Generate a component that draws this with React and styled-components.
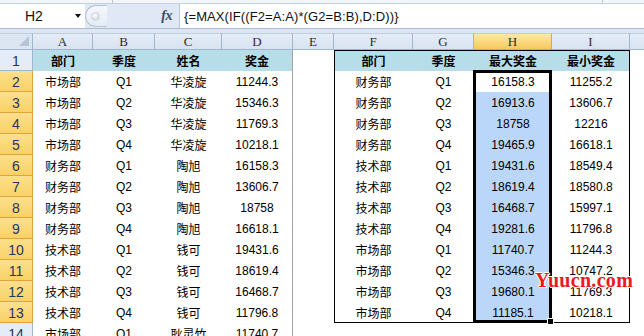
import React from 'react';
import styled, { createGlobalStyle } from 'styled-components';

const GlobalStyle = createGlobalStyle`
  html, body {
    margin: 0;
    padding: 0;
    background: #fff;
    overflow: hidden;
  }
`

const Window = styled.div`
  width: 644px;
  height: 336px;
  overflow: hidden;
  position: relative;
  font-family: "Liberation Sans", "Noto Sans CJK SC", sans-serif;
`

const TopStrip = styled.div`
  height: 3px;
  background: #f2f5f9;
  border-bottom: 1px solid #c3d0df;
  display: flex;
`

const StripTick = styled.div`
  width: ${p => p.$w}px;
  border-right: 1px solid #b9c6d6;
`

const FormulaBar = styled.div`
  display: flex;
  height: 24px;
  background: #dfe8f4;
  border-bottom: 1px solid #a9bbd2;
`

const NameBox = styled.div`
  width: 85px;
  background: #fff;
  display: flex;
  align-items: center;
  padding-left: 25px;
  box-sizing: border-box;
  font-size: 14px;
  color: #111;
`

const DropArrow = styled.div`
  margin-left: auto;
  margin-right: 4px;
  width: 0;
  height: 0;
  border-left: 3.5px solid transparent;
  border-right: 3.5px solid transparent;
  border-top: 4px solid #111;
`

const Grip = styled.div`
  width: 22px;
  height: 22px;
  margin-top: 1px;
  box-sizing: border-box;
  border: 1px solid #b4c3d6;
  border-right: none;
  border-radius: 11px 0 0 11px;
  background: linear-gradient(#f6f8fb, #e4ebf4);
  display: flex;
  align-items: center;
  padding-left: 5px;
`

const GripDot = styled.div`
  width: 7px;
  height: 7px;
  border-radius: 50%;
  background: radial-gradient(circle at 40% 35%, #ffffff, #c2ccd8);
  border: 1px solid #cdd5df;
`

const FxZone = styled.div`
  width: 72px;
  display: flex;
  align-items: center;
  justify-content: flex-end;
  padding-right: 7px;
  box-sizing: border-box;
`

const FxLabel = styled.span`
  font-family: "Liberation Serif", serif;
  font-style: italic;
  font-weight: bold;
  font-size: 14px;
  color: #3a4a60;
  letter-spacing: -0.5px;
`

const FormulaInput = styled.div`
  flex: 1;
  background: #fff;
  border-left: 1px solid #b8c8da;
  display: flex;
  align-items: center;
  padding-left: 4px;
  font-size: 13px;
  letter-spacing: 0.1px;
  color: #111;
  white-space: nowrap;
`

const Gap = styled.div`
  height: 4px;
  background: #dde6f1;
`

const Sheet = styled.div`
  display: grid;
  grid-template-columns: 33px 60px 62px 67px 71px 41px 79px 61px 78px 78px 78px;
  grid-template-rows: 17px;
  grid-auto-rows: 21px;
  position: relative;
`

const Corner = styled.div`
  grid-row: 1;
  grid-column: 1;
  background: #dce6f2;
  border-right: 1px solid #9eb6ce;
  border-bottom: 1px solid #9eb6ce;
  border-top: 1px solid #c0cfe0;
  box-sizing: border-box;
  position: relative;

  &::after {
    content: '';
    position: absolute;
    right: 3px;
    bottom: 3px;
    border-left: 10px solid transparent;
    border-bottom: 10px solid #b6c4d5;
  }
`

const ColHeader = styled.div`
  grid-row: 1;
  grid-column: ${p => p.$c};
  background: ${p => p.$active ? 'linear-gradient(#fde8a6, #f7c95c)' : 'linear-gradient(#e4ecf7, #d9e3f0)'};
  border-right: 1px solid ${p => p.$active ? '#e9a43c' : '#9eb6ce'};
  border-bottom: 1px solid ${p => p.$active ? '#e9a43c' : '#9eb6ce'};
  border-top: 1px solid #c0cfe0;
  box-sizing: border-box;
  display: flex;
  align-items: center;
  justify-content: center;
  font-family: "Liberation Serif", serif;
  font-size: 13px;
  color: #2d2d2d;
`

const RowHeader = styled.div`
  grid-row: ${p => p.$r};
  grid-column: 1;
  background: ${p => p.$active ? 'linear-gradient(#fde08e, #f9d165)' : '#e4ecf7'};
  border-right: 1px solid ${p => p.$active ? '#e3a33a' : '#9eb6ce'};
  border-bottom: 1px solid ${p => p.$active ? '#e3a33a' : '#9eb6ce'};
  box-sizing: border-box;
  display: flex;
  align-items: center;
  justify-content: center;
  padding-top: 2px;
  font-size: 14px;
  color: #1d3760;
`

const Cell = styled.div`
  grid-row: ${p => p.$r};
  grid-column: ${p => p.$c};
  background: ${p => p.$head ? '#b7dee8' : p.$sel ? '#bad7f9' : '#fff'};
  border-right: ${p => p.$edge ? '1px solid #a3a3a3' : 'none'};
  box-sizing: border-box;
  display: flex;
  align-items: center;
  justify-content: center;
  font-size: 12px;
  font-weight: ${p => p.$bold ? 'bold' : 'normal'};
  color: #000;
  white-space: nowrap;
`

const TableFrame = styled.div`
  grid-column: ${p => p.$cols};
  grid-row: ${p => p.$rows};
  border: 1px solid #000;
  pointer-events: none;
  z-index: 1;
`

const SelectionFrame = styled.div`
  grid-column: ${p => p.$cols};
  grid-row: ${p => p.$rows};
  margin: -1px 0 0 -1px;
  border: 3px solid #000;
  position: relative;
  pointer-events: none;
  z-index: 2;
`

const FillHandle = styled.div`
  position: absolute;
  right: -5px;
  bottom: -5px;
  width: 5px;
  height: 5px;
  background: #000;
  border: 1px solid #fff;
`

const Watermark = styled.div`
  position: absolute;
  left: 535px;
  top: 270px;
  font-family: "Liberation Serif", serif;
  font-weight: bold;
  font-size: 20px;
  line-height: 20px;
  letter-spacing: 0.3px;
  color: #ec1a1f;
  text-shadow: 1px 0 #fff, -1px 0 #fff, 0 1px #fff, 0 -1px #fff, 1px 1px #fff, -1px -1px #fff;
  z-index: 3;
`

const columns = ['A', 'B', 'C', 'D', 'E', 'F', 'G', 'H', 'I', 'J'];

const rows = [
  ['部门', '季度', '姓名', '奖金', '', '部门', '季度', '最大奖金', '最小奖金'],
  ['市场部', 'Q1', '华凌旋', '11244.3', '', '财务部', 'Q1', '16158.3', '11255.2'],
  ['市场部', 'Q2', '华凌旋', '15346.3', '', '财务部', 'Q2', '16913.6', '13606.7'],
  ['市场部', 'Q3', '华凌旋', '11769.3', '', '财务部', 'Q3', '18758', '12216'],
  ['市场部', 'Q4', '华凌旋', '10218.1', '', '财务部', 'Q4', '19465.9', '16618.1'],
  ['财务部', 'Q1', '陶旭', '16158.3', '', '技术部', 'Q1', '19431.6', '18549.4'],
  ['财务部', 'Q2', '陶旭', '13606.7', '', '技术部', 'Q2', '18619.4', '18580.8'],
  ['财务部', 'Q3', '陶旭', '18758', '', '技术部', 'Q3', '16468.7', '15997.1'],
  ['财务部', 'Q4', '陶旭', '16618.1', '', '技术部', 'Q4', '19281.6', '11796.8'],
  ['技术部', 'Q1', '钱可', '19431.6', '', '市场部', 'Q1', '11740.7', '11244.3'],
  ['技术部', 'Q2', '钱可', '18619.4', '', '市场部', 'Q2', '15346.3', '10747.2'],
  ['技术部', 'Q3', '钱可', '16468.7', '', '市场部', 'Q3', '19680.1', '11769.3'],
  ['技术部', 'Q4', '钱可', '11796.8', '', '市场部', 'Q4', '11185.1', '10218.1'],
  ['市场部', 'Q1', '耿灵竹', '11740.7', '', '', '', '', ''],
];

const App = () => {
  return (
    <Window>
      <GlobalStyle />
      <TopStrip>
        <StripTick $w={112} />
        <StripTick $w={489} />
      </TopStrip>
      <FormulaBar>
        <NameBox>
          H2
          <DropArrow />
        </NameBox>
        <Grip><GripDot /></Grip>
        <FxZone><FxLabel>fx</FxLabel></FxZone>
        <FormulaInput>{'{=MAX(IF((F2=A:A)*(G2=B:B),D:D))}'}</FormulaInput>
      </FormulaBar>
      <Gap />
      <Sheet>
        <Corner />
        {columns.map((c, j) => (
          <ColHeader key={c} $c={j + 2} $active={c === 'H'}>{c}</ColHeader>
        ))}
        {rows.map((row, i) => {
          const n = i + 1;
          return (
            <React.Fragment key={n}>
              <RowHeader $r={n + 1} $active={n >= 2 && n <= 13}>{n}</RowHeader>
              {columns.map((c, j) => (
                <Cell
                  key={c}
                  $r={n + 1}
                  $c={j + 2}
                  $head={n === 1 && c !== 'E' && c !== 'J'}
                  $bold={n === 1}
                  $sel={c === 'H' && n >= 3 && n <= 13}
                  $edge={c === 'D'}
                >
                  {row[j] || ''}
                </Cell>
              ))}
            </React.Fragment>
          );
        })}
        <TableFrame $cols="7 / 11" $rows="2 / 15" />
        <SelectionFrame $cols="9 / 10" $rows="3 / 15">
          <FillHandle />
        </SelectionFrame>
      </Sheet>
      <Watermark>Yuucn.com</Watermark>
    </Window>
  );
};

export default App;
